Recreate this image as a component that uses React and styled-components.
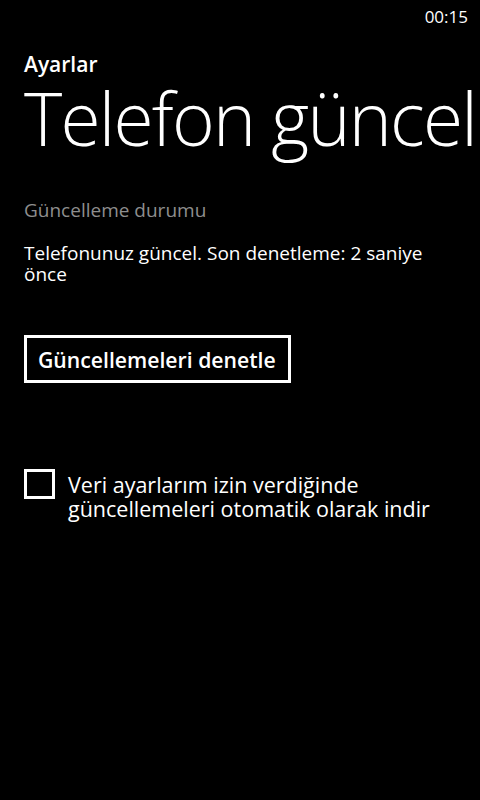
import React from "react";
import styled, { createGlobalStyle } from "styled-components";

const Global = createGlobalStyle`
  html, body {
    margin: 0;
    padding: 0;
    background: #000;
  }
  body {
    font-family: "Open Sans", "Noto Sans", "DejaVu Sans", sans-serif;
    color: #fff;
  }
`;

const Screen = styled.div`
  width: 480px;
  height: 800px;
  background: #000;
  overflow: hidden;
  display: flex;
  flex-direction: column;
`;

const StatusBar = styled.div`
  height: 32px;
  display: flex;
  justify-content: flex-end;
  align-items: center;
  padding-right: 12px;
  font-size: 17px;
  font-weight: 400;
`;

const Header = styled.header`
  padding: 20px 0 0 24px;
  display: flex;
  flex-direction: column;
`;

const AppName = styled.div`
  font-size: 21px;
  font-weight: 600;
  line-height: 24px;
`;

const PageTitle = styled.h1`
  margin: 0;
  font-size: 73px;
  font-weight: 300;
  line-height: 84px;
  white-space: nowrap;
  letter-spacing: -1.8px;
`;

const Content = styled.main`
  padding: 38px 24px 0 24px;
  display: flex;
  flex-direction: column;
  align-items: flex-start;
`;

const Label = styled.div`
  font-size: 19px;
  line-height: ${(p) => p.$lh || 24}px;
  color: ${(p) => (p.$muted ? "#8e8e8e" : "#fff")};
  margin-bottom: ${(p) => p.$gap || 0}px;
`;

const Button = styled.button`
  margin-top: 50px;
  height: 48px;
  padding: 0 12px 0 11px;
  border: 3px solid #fff;
  background: transparent;
  color: #fff;
  font-family: inherit;
  font-size: 21.2px;
  font-weight: 600;
  display: flex;
  align-items: center;
`;

const CheckRow = styled.label`
  margin-top: 86px;
  display: flex;
  align-items: flex-start;
  gap: 13px;
`;

const Box = styled.span`
  flex: none;
  width: 31px;
  height: 30px;
  box-sizing: border-box;
  border: 3px solid #fff;
`;

const CheckText = styled.span`
  margin-top: 4px;
  font-size: 21.5px;
  line-height: 24px;
`;

export default function App() {
  return (
    <Screen>
      <Global />
      <StatusBar>00:15</StatusBar>
      <Header>
        <AppName>Ayarlar</AppName>
        <PageTitle>Telefon güncel</PageTitle>
      </Header>
      <Content>
        <Label $muted $gap={21}>Güncelleme durumu</Label>
        <Label $lh={21}>Telefonunuz güncel. Son denetleme: 2 saniye önce</Label>
        <Button>Güncellemeleri denetle</Button>
        <CheckRow>
          <Box />
          <CheckText>
            Veri ayarlarım izin verdiğinde<br />
            güncellemeleri otomatik olarak indir
          </CheckText>
        </CheckRow>
      </Content>
    </Screen>
  );
}
